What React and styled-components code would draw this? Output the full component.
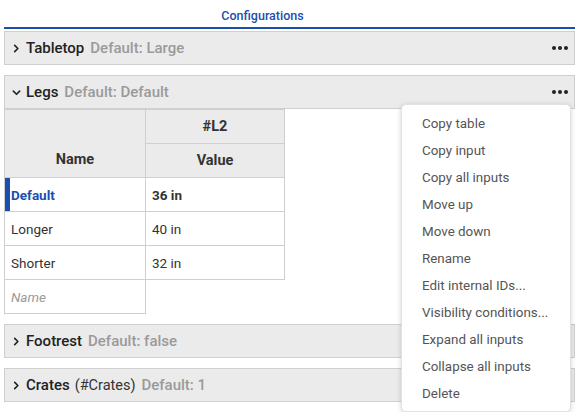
import styled, { createGlobalStyle } from "styled-components";

const GlobalStyle = createGlobalStyle`
  body {
    margin: 0;
    font-family: Roboto, "Noto Sans", sans-serif;
    background: #fff;
    color: #333;
  }
`;

const Page = styled.div`
  position: relative;
  width: 576px;
  height: 412px;
  overflow: hidden;
  padding: 0 1px 0 4px;
  box-sizing: border-box;
`;

const Title = styled.div`
  height: 29px;
  display: flex;
  align-items: center;
  justify-content: center;
  padding: 4px 54px 0 0;
  box-sizing: border-box;
  font-size: 12.5px;
  font-weight: 500;
  color: #1b4fae;
  border-bottom: 2px solid #1b4fae;
  margin-bottom: 2px;
`;

const Section = styled.div`
  margin-bottom: 10px;
`;

const Header = styled.div`
  height: 34px;
  box-sizing: border-box;
  display: flex;
  align-items: center;
  gap: 5px;
  padding: 0 6px 0 7px;
  background: #ebebeb;
  border: 1px solid #cfcfcf;
`;

const Name = styled.span`
  font-size: 15px;
  font-weight: 500;
  color: #222;
`;

const Extra = styled.span`
  font-size: 14.5px;
  color: #333;
`;

const Default = styled.span`
  font-size: 15px;
  font-weight: 500;
  color: #9a9a9a;
  margin-left: 1px;
`;

const Dots = styled.div`
  margin-left: auto;
  display: flex;
  gap: 2px;
  span {
    width: 4px;
    height: 4px;
    border-radius: 50%;
    background: #222;
  }
`;

const Table = styled.table`
  border-collapse: collapse;
  font-size: 13.5px;
  td, th {
    border: 1px solid #cfcfcf;
    height: 34px;
    box-sizing: border-box;
    padding: 0 6px;
  }
  th {
    background: #ebebeb;
    font-weight: 700;
    color: #333;
    font-size: 14.5px;
  }
`;

const Cell = styled.td`
  width: ${(p) => p.$w}px;
  color: ${(p) => (p.$active ? "#1b4fae" : "#333")};
  font-weight: ${(p) => (p.$bold ? 700 : 400)};
  box-shadow: ${(p) => (p.$active ? "inset 5px 0 0 #1b4fae" : "none")};
`;

const Placeholder = styled.td`
  color: #999;
  font-style: italic;
`;

const Menu = styled.div`
  position: absolute;
  top: 104px;
  left: 401px;
  width: 170px;
  padding: 5px 0 4px;
  background: #fff;
  border: 1px solid #e2e2e2;
  border-radius: 5px;
  box-shadow: 0 1px 5px rgba(0, 0, 0, 0.18);
  box-sizing: border-box;
`;

const MenuItem = styled.div`
  height: 27px;
  display: flex;
  align-items: center;
  padding-left: 20px;
  font-size: 13.4px;
  color: #555;
`;

const Chevron = ({ open }) => (
  <svg width="9" height="9" viewBox="0 0 10 10" style={{ flexShrink: 0 }}>
    <path
      d={open ? "M1.5 3.5 L5 7 L8.5 3.5" : "M3 1.5 L6.5 5 L3 8.5"}
      fill="none"
      stroke="#222"
      strokeWidth="1.8"
      strokeLinecap="round"
      strokeLinejoin="round"
    />
  </svg>
);

const SectionHeader = ({ open, name, extra, def, menu }) => (
  <Header>
    <Chevron open={open} />
    <Name>{name}</Name>
    {extra && <Extra>{extra}</Extra>}
    <Default>Default: {def}</Default>
    {menu && (
      <Dots>
        <span />
        <span />
        <span />
      </Dots>
    )}
  </Header>
);

const menuItems = [
  "Copy table",
  "Copy input",
  "Copy all inputs",
  "Move up",
  "Move down",
  "Rename",
  "Edit internal IDs...",
  "Visibility conditions...",
  "Expand all inputs",
  "Collapse all inputs",
  "Delete",
];

const rows = [
  { name: "Default", value: "36 in", active: true },
  { name: "Longer", value: "40 in" },
  { name: "Shorter", value: "32 in" },
];

export default function App() {
  return (
    <Page>
      <GlobalStyle />
      <Title>Configurations</Title>
      <Section>
        <SectionHeader name="Tabletop" def="Large" menu />
      </Section>
      <Section>
        <SectionHeader open name="Legs" def="Default" menu />
        <Table>
          <thead>
            <tr>
              <th rowSpan={2} style={{ verticalAlign: "bottom", paddingBottom: 9 }}>
                Name
              </th>
              <th>#L2</th>
            </tr>
            <tr>
              <th>Value</th>
            </tr>
          </thead>
          <tbody>
            {rows.map((r) => (
              <tr key={r.name}>
                <Cell $w={141} $active={r.active} $bold={r.active}>
                  {r.name}
                </Cell>
                <Cell $w={139} $bold={r.active}>
                  {r.value}
                </Cell>
              </tr>
            ))}
            <tr>
              <Placeholder>Name</Placeholder>
            </tr>
          </tbody>
        </Table>
      </Section>
      <Section>
        <SectionHeader name="Footrest" def="false" />
      </Section>
      <Section>
        <SectionHeader name="Crates" extra="(#Crates)" def="1" />
      </Section>
      <Menu>
        {menuItems.map((m) => (
          <MenuItem key={m}>{m}</MenuItem>
        ))}
      </Menu>
    </Page>
  );
}
